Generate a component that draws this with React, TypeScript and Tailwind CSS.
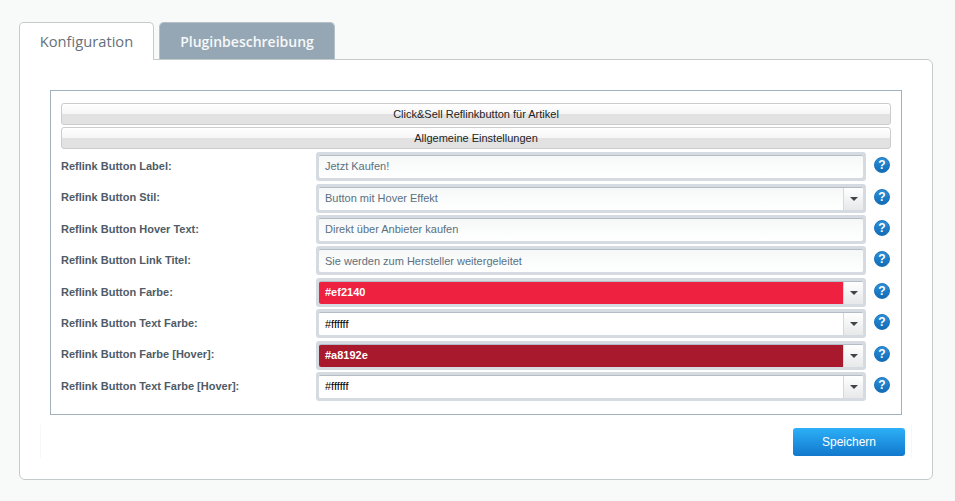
import React from 'react';

const rows = [
  { label: 'Reflink Button Label:', value: 'Jetzt Kaufen!', type: 'text' },
  { label: 'Reflink Button Stil:', value: 'Button mit Hover Effekt', type: 'select' },
  { label: 'Reflink Button Hover Text:', value: 'Direkt über Anbieter kaufen', type: 'text' },
  { label: 'Reflink Button Link Titel:', value: 'Sie werden zum Hersteller weitergeleitet', type: 'text' },
  { label: 'Reflink Button Farbe:', value: '#ef2140', type: 'red' },
  { label: 'Reflink Button Text Farbe:', value: '#ffffff', type: 'white' },
  { label: 'Reflink Button Farbe [Hover]:', value: '#a8192e', type: 'dark' },
  { label: 'Reflink Button Text Farbe [Hover]:', value: '#ffffff', type: 'white' },
];

const HelpIcon = () => (
  <div className="w-4 h-4 rounded-full bg-gradient-to-b from-[#2c90da] to-[#106cb6] border border-[#1a72b8] flex items-center justify-center text-white text-[12px] font-bold leading-none shrink-0">
    ?
  </div>
);

const Bar = ({ title }: { title: string }) => (
  <div className="relative h-[22px] rounded-[3px] border border-[#ccc] bg-gradient-to-b from-[#ffffff] from-0% via-[#f6f6f6] via-50% to-[#e2e2e2] to-50% flex items-center justify-center text-[11px] text-[#222]">
    {title}
  </div>
);

const Row = ({ label, value, type }: { label: string; value: string; type: string }) => {
  const isColor = type === 'red' || type === 'dark' || type === 'white';
  const bg =
    type === 'red' ? 'bg-[#ef2140] text-white font-bold' :
    type === 'dark' ? 'bg-[#a8192e] text-white font-bold' :
    type === 'white' ? 'bg-white text-black' :
    'bg-gradient-to-b from-[#f6f8f8] to-white text-[#5a7080]';
  return (
    <div className="flex items-center h-[31.43px]">
      <div className="w-[255px] shrink-0 text-[11px] font-bold text-[#4f5b66] pb-[1px]">{label}</div>
      <div className="w-[550px] h-[29px] shrink-0 rounded-[3px] bg-[#d6dbe1] p-[3px]">
        <div className="h-full flex border-t border-t-[#b4bcc5] rounded-[2px] overflow-hidden bg-white">
          <div className={`flex-1 flex items-center pl-[6px] pb-[1px] text-[11px] ${bg}`}>{value}</div>
          {(type === 'select' || isColor) && (
            <div className="w-[20px] border-l border-[#d5d9dd] bg-gradient-to-b from-white to-[#e6e8ea] flex items-center justify-center">
              <div className="w-0 h-0 border-x-[4px] border-x-transparent border-t-[4px] border-t-[#444]" />
            </div>
          )}
        </div>
      </div>
      <div className="ml-[8px] mb-[3px]"><HelpIcon /></div>
    </div>
  );
};

export default function App() {
  return (
    <div className="w-[955px] h-[501px] overflow-hidden bg-[#f8f9f9] pt-[22px] pl-[19px] font-['Liberation_Sans',sans-serif]">
      <div className="flex items-start gap-[5px] relative z-10 h-[38px]">
        <div className="w-[135px] h-[38px] bg-white border border-b-0 border-[#c5cacd] rounded-t-[5px] flex items-center justify-center text-[14.7px] text-[#66707a] font-['Open_Sans',sans-serif]">
          Konfiguration
        </div>
        <div className="w-[176px] h-[37px] bg-[#95a7b5] border border-b-0 border-[#b5c0c8] rounded-t-[5px] flex items-center justify-center text-[14px] font-semibold text-[#f6f8f9] font-['Open_Sans',sans-serif]">
          Pluginbeschreibung
        </div>
      </div>
      <div className="w-[914px] h-[421px] -mt-px bg-white border border-[#c5cacd] rounded-b-[6px] rounded-tr-[6px] pt-[30px] pl-[30px]">
        <div className="w-[852px] h-[325px] border border-[#9fb0bf] px-[10px] pt-[12px]">
          <div className="flex flex-col gap-[2px] mb-[2px]">
            <Bar title="Click&Sell Reflinkbutton für Artikel" />
            <Bar title="Allgemeine Einstellungen" />
          </div>
          {rows.map((r) => <Row key={r.label} {...r} />)}
        </div>
        <div className="-ml-[10px] w-[872px] h-[33px] mt-[10px] pt-[3px] pr-[6px] flex justify-end border-x border-[#f6f7f7]">
          <div className="w-[112px] h-[28px] rounded-[3px] bg-gradient-to-b from-[#2db0f8] to-[#1278cc] flex items-center justify-center text-[12px] text-white">
            Speichern
          </div>
        </div>
      </div>
    </div>
  );
}
